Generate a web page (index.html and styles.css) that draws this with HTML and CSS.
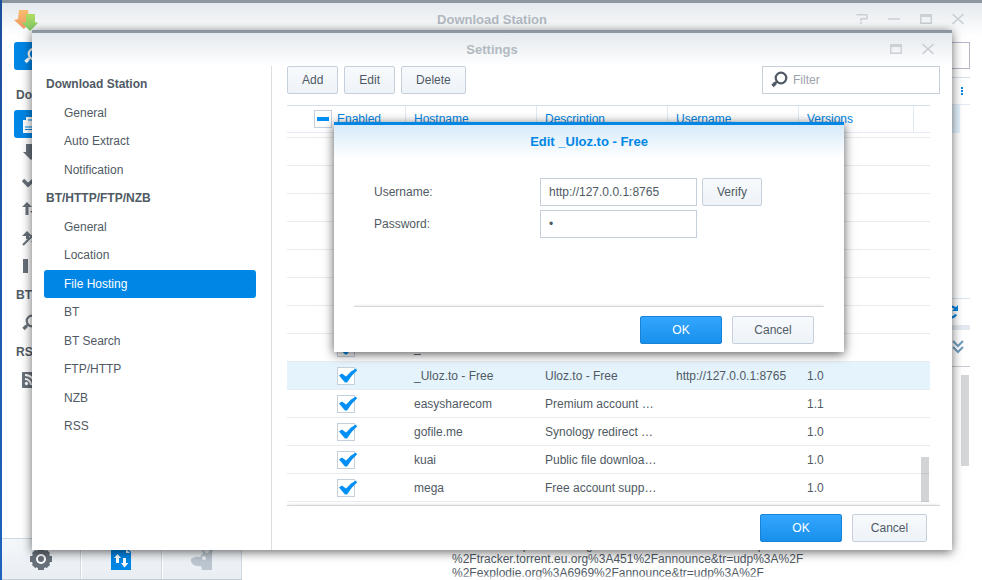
FILE: index.html
```html
<!DOCTYPE html>
<html lang="en">
<head>
<meta charset="utf-8">
<title>Download Station</title>
<link rel="stylesheet" href="styles.css">
</head>
<body>
<svg class="defs" aria-hidden="true">
  <symbol id="i-max" viewBox="0 0 12 12"><path fill="#dfe2e5" fill-rule="evenodd" d="M0 1h12v10H0zM2 4v5h8V4z"/><path fill="currentColor" fill-rule="evenodd" d="M0 1h12v10H0zM1 4v6h10V4z"/></symbol>
  <symbol id="i-close" viewBox="0 0 12 12"><path d="M.5 1L11.500 11M11.500 1L.5 11" stroke="currentColor" stroke-width="1.600" fill="none"/></symbol>
  <symbol id="i-mag" viewBox="0 0 18 18"><circle cx="10" cy="7" r="5.300" fill="none" stroke="currentColor" stroke-width="2.200"/><path d="M6.500 10.500L3.500 12.500" stroke="currentColor" stroke-width="2.200"/><path d="M4.500 12L1.500 15" stroke="currentColor" stroke-width="3.400"/></symbol>
</svg>
<div class="desktop">
  <section class="app">
    <header class="titlebar">
      <svg class="logo" viewBox="0 0 24 22" aria-hidden="true"><defs><linearGradient id="lo" x2="0" y2="1"><stop stop-color="#f9bd6c"/><stop offset="1" stop-color="#ef9468"/></linearGradient><linearGradient id="lg" x2="0" y2="1"><stop stop-color="#b0dc62"/><stop offset="1" stop-color="#80c868"/></linearGradient></defs><path fill="url(#lo)" d="M5 1h9l1 9h3l-8 10L0 11l4-1z"/><path fill="url(#lg)" d="M12 5h9v8l3 1-8 8-8-8 4-1z"/></svg>
      <h1>Download Station</h1>
      <div class="controls">
        <button type="button" aria-label="Help"><svg viewBox="0 0 12 12"><path d="M.5 1.700h10.500V5.700H5V8M5 9v2" stroke="currentColor" stroke-width="1.500" fill="none"/></svg></button>
        <button type="button" aria-label="Minimize"><svg viewBox="0 0 12 12"><path d="M0 6h12" stroke="currentColor" stroke-width="1.500"/></svg></button>
        <button type="button" aria-label="Maximize"><svg><use href="#i-max"/></svg></button>
        <button type="button" aria-label="Close"><svg><use href="#i-close"/></svg></button>
      </div>
    </header>
    <div class="app-body">
      <aside class="app-side">
        <button type="button" class="search-btn" aria-label="Search"><svg><use href="#i-mag"/></svg></button>
        <ul class="nav">
          <li class="head">Download</li>
          <li class="active"><svg viewBox="0 0 18 18" aria-hidden="true"><path fill="#fff" d="M4 2h10l4 4v12H1V5h3z"/><path d="M3 12h12M3 14.500h12M6 5h5v4" stroke="#0086e5" stroke-width="1.200" fill="none"/></svg></li>
          <li><svg viewBox="0 0 18 18" aria-hidden="true"><path fill="currentColor" d="M4 1h9v8h4l-8 8-8-8h3z"/></svg></li>
          <li><svg viewBox="0 0 18 18" aria-hidden="true"><path d="M1 8l5 5L16 4" stroke="currentColor" stroke-width="3.500" fill="none"/></svg></li>
          <li><svg viewBox="0 0 18 18" aria-hidden="true"><path fill="currentColor" d="M3.500 15V7H0l5-5 5 5H6.500v8zM11 2h3v9h3l-4 5-5-5h3z"/></svg></li>
          <li><svg viewBox="0 0 18 18" aria-hidden="true"><path fill="currentColor" d="M4 10V7H0l5-5 5 5H7v3zM11 9h3v3h3l-4 5-4-5h2z"/><path d="M1 16L14 3" stroke="currentColor" stroke-width="2.200"/></svg></li>
          <li><svg viewBox="0 0 18 18" aria-hidden="true"><path fill="currentColor" d="M1 2h5v14H1zM11 2h5v14h-5z"/></svg></li>
          <li class="head">BT</li>
          <li><svg><use href="#i-mag"/></svg></li>
          <li class="head">RSS</li>
          <li><svg viewBox="0 0 18 18" aria-hidden="true"><rect y="1" width="16" height="16" rx="1" fill="currentColor"/><circle cx="4.500" cy="12.500" r="1.700" fill="#fff"/><path d="M3 8a6 6 0 0 1 6 6M3 4a10 10 0 0 1 10 10" stroke="#fff" stroke-width="2" fill="none"/></svg></li>
        </ul>
        <div class="tabs">
          <button type="button" aria-label="Settings"><svg viewBox="0 0 22 22"><g fill="currentColor"><circle cx="11" cy="11" r="9.500"/><path d="M8 0h6v22h-6zM0 8h22v6H0z"/><path d="M8.500 .5h5v21h-5zM.5 8.500h21v5H.5z" transform="rotate(45 11 11)"/></g><circle cx="11" cy="11" r="4" fill="none" stroke="#fff" stroke-width="2"/></svg></button>
          <button type="button" aria-label="Transfers"><svg viewBox="0 0 22 22"><path fill="#0086e5" d="M1 0h16l4 4v18H1z"/><path fill="#fff" d="M6 15v-5H4l3.500-4L11 10H9v5zM13 10h3v5h2.500L14.500 19.500 11 15h2zM16 1l4 4h-4z"/></svg></button>
          <button type="button" aria-label="eMule" class="dim"><svg viewBox="0 0 22 22"><path fill="currentColor" d="M0 11q4-3 9-2l3-4-2-5 5 5 2 0 3-6 2 1-1 6v16H11l-1-4q-9 1-10-5z"/><circle cx="13" cy="10" r="2" fill="#eef2f6"/></svg></button>
        </div>
      </aside>
      <main class="app-main">
        <input class="app-filter" type="text" aria-label="Search downloads">
        <div class="list">
          <div class="list-head"><svg viewBox="0 0 2 8" aria-hidden="true"><path fill="#0086e5" d="M0 0h2v2H0zM0 3h2v2H0zM0 6h2v2H0z"/></svg></div>
          <div class="list-row"></div>
        </div>
        <div class="pager"><svg viewBox="0 0 14 14" aria-hidden="true"><path d="M12 4.500a5.500 5.500 0 1 0 0 5" stroke="#0086e5" stroke-width="2.400" fill="none"/><path fill="#0086e5" d="M14 0v6H8z"/></svg></div>
        <div class="detail-bar"><svg viewBox="0 0 12 14" aria-hidden="true"><path d="M1 1l5 5 5-5M1 7l5 5 5-5" stroke="#6f9dbd" stroke-width="2" fill="none"/></svg></div>
        <div class="detail">
          <div class="detail-scroll"></div>
          <p>%2Ftracker.opentrackr.org%3A1337%2Fannounce&amp;tr=udp%3A%2F<br>%2Ftracker.torrent.eu.org%3A451%2Fannounce&amp;tr=udp%3A%2F<br>%2Fexplodie.org%3A6969%2Fannounce&amp;tr=udp%3A%2F</p>
        </div>
      </main>
    </div>
  </section>

  <section class="settings">
    <header class="titlebar">
      <h2>Settings</h2>
      <div class="controls">
        <button type="button" aria-label="Maximize"><svg><use href="#i-max"/></svg></button>
        <button type="button" aria-label="Close"><svg><use href="#i-close"/></svg></button>
      </div>
    </header>
    <div class="settings-body">
      <nav class="settings-side">
        <ul class="nav">
          <li class="head">Download Station</li>
          <li><a href="#">General</a></li>
          <li><a href="#">Auto Extract</a></li>
          <li><a href="#">Notification</a></li>
          <li class="head">BT/HTTP/FTP/NZB</li>
          <li><a href="#">General</a></li>
          <li><a href="#">Location</a></li>
          <li class="active"><a href="#">File Hosting</a></li>
          <li><a href="#">BT</a></li>
          <li><a href="#">BT Search</a></li>
          <li><a href="#">FTP/HTTP</a></li>
          <li><a href="#">NZB</a></li>
          <li><a href="#">RSS</a></li>
        </ul>
      </nav>
      <div class="settings-main">
        <div class="toolbar">
          <button type="button" class="btn">Add</button>
          <button type="button" class="btn">Edit</button>
          <button type="button" class="btn">Delete</button>
          <label class="filter"><svg aria-hidden="true"><use href="#i-mag"/></svg><input type="text" placeholder="Filter" aria-label="Filter"></label>
        </div>
        <div class="grid">
          <table>
            <colgroup><col class="c-first"><col class="c-mid"><col class="c-mid"><col class="c-mid"><col class="c-ver"><col></colgroup>
            <thead><tr><th><label class="all"><input type="checkbox" class="partial">Enabled</label></th><th>Hostname</th><th>Description</th><th>Username</th><th>Versions</th><th></th></tr></thead>
            <tbody>
              <tr class="cut"><td colspan="6"></td></tr>
              <tr><td></td><td></td><td></td><td></td><td></td><td></td></tr>
              <tr><td></td><td></td><td></td><td></td><td></td><td></td></tr>
              <tr><td></td><td></td><td></td><td></td><td></td><td></td></tr>
              <tr><td></td><td></td><td></td><td></td><td></td><td></td></tr>
              <tr><td></td><td></td><td></td><td></td><td></td><td></td></tr>
              <tr><td></td><td></td><td></td><td></td><td></td><td></td></tr>
              <tr><td></td><td></td><td></td><td></td><td></td><td></td></tr>
              <tr><td><input type="checkbox" checked aria-label="Enable"></td><td>_</td><td></td><td></td><td></td><td></td></tr>
              <tr class="selected"><td><input type="checkbox" checked aria-label="Enable _Uloz.to - Free"></td><td>_Uloz.to - Free</td><td>Uloz.to - Free</td><td>http://127.0.0.1:8765</td><td>1.0</td><td></td></tr>
              <tr><td><input type="checkbox" checked aria-label="Enable easysharecom"></td><td>easysharecom</td><td>Premium account …</td><td></td><td>1.1</td><td></td></tr>
              <tr><td><input type="checkbox" checked aria-label="Enable gofile.me"></td><td>gofile.me</td><td>Synology redirect …</td><td></td><td>1.0</td><td></td></tr>
              <tr><td><input type="checkbox" checked aria-label="Enable kuai"></td><td>kuai</td><td>Public file downloa…</td><td></td><td>1.0</td><td></td></tr>
              <tr><td><input type="checkbox" checked aria-label="Enable mega"></td><td>mega</td><td>Free account supp…</td><td></td><td>1.0</td><td></td></tr>
            </tbody>
          </table>
          <div class="grid-scroll"></div>
        </div>
        <footer class="settings-foot">
          <button type="button" class="btn primary">OK</button>
          <button type="button" class="btn">Cancel</button>
        </footer>
      </div>
    </div>
  </section>

  <form class="dialog" role="dialog" aria-labelledby="dlg">
    <h2 id="dlg">Edit _Uloz.to - Free</h2>
    <div class="fields">
      <label for="user">Username:</label>
      <input id="user" type="text" value="http://127.0.0.1:8765">
      <button type="button" class="btn">Verify</button>
      <label for="pass">Password:</label>
      <input id="pass" type="password" value="x">
    </div>
    <footer>
      <button type="button" class="btn primary">OK</button>
      <button type="button" class="btn wide">Cancel</button>
    </footer>
  </form>
</div>
</body>
</html>
```
FILE: styles.css
```css
* { box-sizing: border-box; }
html, body { height: 100%; margin: 0; }
body, button, input {
  font-family: "Liberation Sans", Arial, sans-serif;
  font-size: 12px;
  color: #505a64;
}
h1, h2, p, ul { margin: 0; padding: 0; }
ul { list-style: none; }
a { color: inherit; text-decoration: none; }
svg { display: block; flex: none; }
.defs { position: absolute; width: 0; height: 0; }

.desktop {
  position: relative;
  height: 100%;
  padding-left: 2px;
  overflow: hidden;
  background: linear-gradient(#1c4f9c, #1d63bd);
}

/* windows */
.app {
  display: flex;
  flex-direction: column;
  height: 100%;
  background: #fff;
  border-top: 3px solid #8b96a1;
}
.titlebar {
  position: relative;
  display: flex;
  align-items: center;
  justify-content: center;
  flex: none;
  height: 33px;
  background: linear-gradient(#e4e9ee, #fff);
}
.titlebar h1, .titlebar h2 {
  font-size: 13px;
  line-height: 16px;
  color: #b1b9c1;
}
.logo { position: absolute; left: 12px; top: 6px; width: 24px; height: 22px; }
.controls {
  position: absolute;
  right: 18px;
  top: 10px;
  display: flex;
  gap: 20px;
  color: #cbd0d4;
}
.controls button {
  width: 12px;
  height: 12px;
  padding: 0;
  border: 0;
  background: none;
  color: inherit;
}
.controls svg { width: 12px; height: 12px; }

.nav li { display: flex; align-items: center; height: 28px; }
.nav li:nth-child(even) { margin-top: 1px; }
.nav .head { font-weight: bold; }
.nav .active { background: #0086e5; color: #fff; border-radius: 3px; }

/* main application */
.app-body { display: flex; flex: 1; min-height: 0; }
.app-side { display: flex; flex-direction: column; width: 240px; padding-top: 6px; color: #68717b; }
.search-btn {
  display: flex;
  align-items: center;
  height: 28px;
  margin: 0 12px 11px;
  padding: 0 10px;
  border: 0;
  border-radius: 3px;
  background: #0086e5;
  color: #fff;
}
.app-side svg { width: 18px; height: 18px; }
.app-side .nav { margin: 0 12px; }
.app-side .nav li { padding-left: 8px; }
.app-side .nav .head { padding-left: 2px; color: #505a64; }
.tabs {
  display: flex;
  gap: 1px;
  margin-top: auto;
  height: 42px;
  border-top: 1px solid #ccd9e4;
  border-bottom: 1px solid #c4ccd4;
}
.tabs button {
  display: flex;
  flex: 1;
  align-items: center;
  justify-content: center;
  padding: 0;
  border: 0;
  border-right: 1px solid #d0dbe6;
  background: linear-gradient(#f5f8fb, #e8edf2);
  color: #68717b;
}
.tabs button svg { width: 22px; height: 22px; }
.tabs .dim { color: #bcc6d0; }
.app-main { display: flex; flex-direction: column; flex: 1; min-width: 0; padding: 6px 12px 0 10px; }
.app-filter {
  align-self: flex-end;
  width: 178px;
  height: 27px;
  border: 1px solid #b5b6cb;
}
.list { flex: 1; margin-top: 8px; border-top: 1px solid #d5e0ea; }
.list-head {
  display: flex;
  align-items: center;
  justify-content: flex-end;
  height: 27px;
  padding-right: 7px;
  border-bottom: 1px solid #e3eaf1;
}
.list-head svg { width: 2px; height: 8px; }
.list-row { height: 28px; margin-right: 10px; background: #e3f2fd; }
.pager {
  display: flex;
  align-items: center;
  justify-content: flex-end;
  height: 27px;
  padding-right: 12px;
  border-top: 1px solid #d9e5ef;
}
.pager svg { width: 14px; height: 14px; }
.detail-bar {
  display: flex;
  align-items: center;
  justify-content: flex-end;
  height: 42px;
  padding: 0 6px 3px 0;
  border-top: 5px solid #e2e8ef;
  border-bottom: 1px solid #c6cbd1;
}
.detail-bar svg { width: 12px; height: 14px; }
.detail {
  position: relative;
  display: flex;
  align-items: flex-end;
  height: 213px;
}
.detail::after {
  content: "";
  position: absolute;
  left: 0;
  right: 0;
  bottom: 0;
  height: 5px;
  background: linear-gradient(rgba(255, 255, 255, 0.2), #fff);
}
.detail p { padding-left: 200px; line-height: 14px; }
.detail-scroll {
  position: absolute;
  right: 1px;
  top: 8px;
  width: 8px;
  height: 91px;
  background: #d4d6d8;
}

/* settings window */
.settings {
  position: absolute;
  left: 32px;
  right: 30px;
  top: 30px;
  bottom: 30px;
  display: flex;
  flex-direction: column;
  background: #fff;
  border-top: 3px solid #8b96a1;
  box-shadow: 0 2px 10px rgba(0, 0, 0, 0.6);
}
.settings-body { display: flex; flex: 1; min-height: 0; }
.settings-side { width: 240px; padding: 4px 15px 0 12px; border-right: 1px solid #dcdfe2; }
.settings-side li { padding-left: 20px; }
.settings-side .head { padding-left: 2px; }
.settings-main { display: flex; flex: 1; flex-direction: column; min-width: 0; padding-left: 15px; }
.toolbar { display: flex; gap: 6px; margin: 0 12px 11px 0; }
.btn {
  height: 28px;
  padding: 0 14px;
  border: 1px solid #c6d0dc;
  border-radius: 2px;
  background: linear-gradient(#f7fafd, #eef3f8);
}
.btn.primary {
  width: 82px;
  border-color: #1883d7;
  background: linear-gradient(#33a6ff, #1890eb);
  color: #fff;
}
.btn.wide { width: 82px; }
.filter {
  display: flex;
  align-items: center;
  gap: 4px;
  width: 178px;
  height: 28px;
  margin-left: auto;
  padding-left: 8px;
  border: 1px solid #c6d0dc;
  color: #505a64;
}
.filter svg { width: 18px; height: 18px; }
.filter input { min-width: 0; flex: 1; padding: 0; border: 0; outline: 0; background: none; }
.filter input::placeholder { color: #9aa2ab; }

.grid {
  position: relative;
  flex: 1;
  min-height: 0;
  margin-right: 22px;
  overflow: hidden;
  border-top: 1px solid #d5e0ea;
}
.grid table { width: 100%; table-layout: fixed; border-collapse: separate; border-spacing: 0; }
.c-first { width: 119px; }
.c-mid { width: 131px; }
.c-ver { width: 115px; }
th {
  height: 27px;
  padding: 0 8px;
  border-right: 1px solid #e0eaf3;
  border-bottom: 1px solid #e3eaf1;
  color: #0086e5;
  font-weight: normal;
  text-align: left;
}
th:first-child { padding: 0 0 0 27px; }
th:last-child { border-right: 0; }
.all { display: flex; align-items: center; gap: 5px; }
td { height: 28px; padding: 0 8px; border-bottom: 1px solid #e9ecee; white-space: nowrap; overflow: hidden; }
td:first-child { padding: 0 0 0 50px; }
.cut td { height: 5px; padding: 0; }
.selected td { background: #e5f3fd; }
input[type="checkbox"] {
  appearance: none;
  display: block;
  flex: none;
  width: 18px;
  height: 18px;
  margin: 0;
  border: 1px solid #c6d0dc;
  background: #fff;
}
input[type="checkbox"]:checked::before {
  content: "";
  display: block;
  width: 20px;
  height: 18px;
  background: #0090f5;
  clip-path: polygon(1px 8px, 4px 6px, 8px 9px, 13px 4px, 18px 1px, 19px 3px, 14px 8px, 9px 15px, 7px 15px);
}
.partial::before {
  content: "";
  display: block;
  width: 12px;
  height: 4px;
  margin: 6px 2px;
  background: #0090f5;
}
.grid-scroll {
  position: absolute;
  right: 1px;
  bottom: 0;
  width: 8px;
  height: 45px;
  background: rgba(140, 143, 148, 0.38);
}
.settings-foot {
  display: flex;
  justify-content: flex-end;
  gap: 10px;
  margin-right: 12px;
  margin-top: 3px;
  padding: 8px 13px 8px 0;
  border-top: 1px solid #d3d6da;
  box-shadow: 0 -2px 2px -1px rgba(0, 0, 0, 0.08);
}
.settings-foot .btn:last-child { width: 75px; }

/* edit dialog */
.dialog {
  position: absolute;
  left: 334px;
  top: 122px;
  width: 510px;
  border-top: 3px solid #0086e5;
  background: linear-gradient(#d6eafa, #fff 33px);
  box-shadow: 0 2px 10px rgba(0, 0, 0, 0.65);
}
.dialog h2 {
  font-size: 13px;
  line-height: 33px;
  text-align: center;
  color: #0086e5;
}
.fields {
  display: grid;
  grid-template-columns: 161px 157px auto;
  justify-content: start;
  align-items: center;
  gap: 4px 5px;
  padding: 20px 40px 68px;
}
.fields input {
  width: 100%;
  height: 28px;
  padding: 0 8px;
  border: 1px solid #c6d0dc;
}
.dialog footer {
  display: flex;
  justify-content: flex-end;
  gap: 10px;
  margin: 0 20px;
  padding: 9px 10px 8px;
  border-top: 1px solid #d3d6da;
  box-shadow: 0 -2px 2px -1px rgba(0, 0, 0, 0.08);
}
```
